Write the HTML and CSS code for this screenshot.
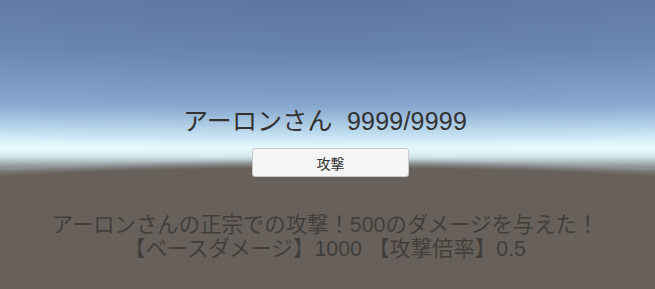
FILE: index.html
```html
<!DOCTYPE html>
<html lang="ja">
<head>
    <meta charset="UTF-8">
    <meta name="viewport" content="width=device-width, initial-scale=1.0">
    <title>攻撃</title>
    <link rel="stylesheet" href="styles.css">
</head>
<body>
    <section class="scene">
        <h2 class="status">アーロンさん&nbsp;&nbsp;9999/9999</h2>
        <button class="attack">攻撃</button>
        <p class="log">アーロンさんの正宗での攻撃！500のダメージを与えた！<br>【ベースダメージ】1000 【攻撃倍率】0.5</p>
    </section>
</body>
</html>
```

FILE: styles.css
```css
html, body{
    margin: 0;
    height: 100%;
}

body{
    background-color: #68615b;
    background-image:
        radial-gradient(ellipse 1170px 200px at 50% 359px, #68615b 95.5%, rgba(150,160,165,0.6) 99%, rgba(220,245,250,0) 100%),
        radial-gradient(ellipse 600px 160px at 50% 0, rgba(70,95,140,0.3), rgba(70,95,140,0) 100%),
        linear-gradient(#6580ad 0px, #6f8cb8 50px, #8cadd4 105px, #c6e4f4 134px, #e9fdff 148px, #d8ecf0 156px, #9aa2a4 165px, #68615b 172px);
    font-family: "Liberation Sans", "Noto Sans CJK JP", sans-serif;
    overflow: hidden;
}

.scene{
    display: flex;
    flex-direction: column;
    align-items: center;
    padding-top: 105px;
}

.status{
    margin: 0 0 0 -5px;
    font-size: 25px;
    font-weight: normal;
    line-height: 32px;
    color: #323232;
    letter-spacing: 0.2px;
}

.attack{
    margin: 11px 0 0 6px;
    width: 157px;
    height: 29px;
    background-color: #f5f5f5;
    border: 1px solid #c8c8c8;
    border-radius: 3px;
    font-family: inherit;
    font-size: 14px;
    color: #323232;
    padding: 0;
}

.log{
    margin: 36px 0 0 -5px;
    font-size: 21.4px;
    line-height: 24px;
    text-align: center;
    color: #423e3a;
}
```
